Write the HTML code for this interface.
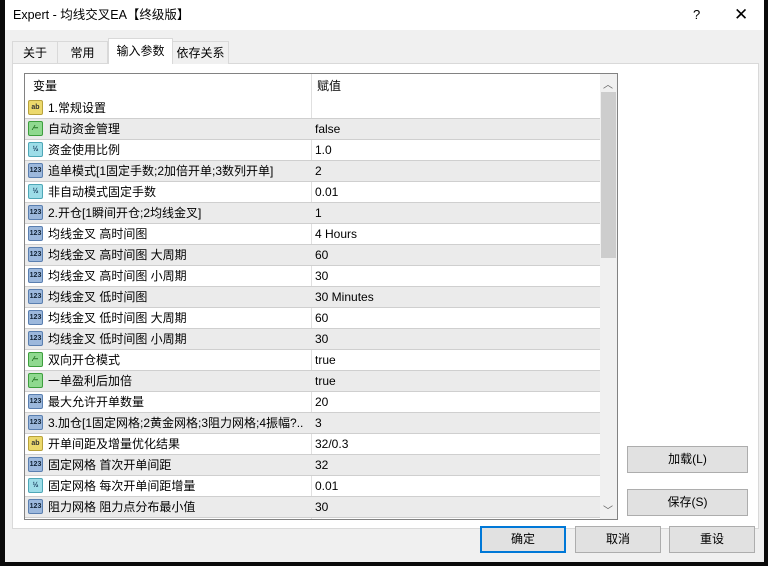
<!DOCTYPE html>
<html><head><meta charset="utf-8">
<style>
*{box-sizing:border-box;margin:0;padding:0}
body{width:768px;height:566px;background:#0a0a0a;position:relative;overflow:hidden;font-family:"Liberation Sans","Noto Sans CJK SC",sans-serif;font-size:12px;color:#000}
.win{position:absolute;left:5px;top:0;width:759px;height:562px;background:#f0f0f0}
.title{position:absolute;left:0;top:0;width:100%;height:30px;background:#fff}
.title .t{position:absolute;left:8px;top:0;line-height:30px;font-size:12.5px;white-space:nowrap}
.title .q{position:absolute;left:688px;top:0;line-height:30px;font-size:13px}
.title .x{position:absolute;left:729px;top:0;line-height:30px;font-size:17px}
.tab{position:absolute;top:41px;height:23px;border:1px solid #d9d9d9;border-bottom:none;background:#f0f0f0;line-height:22px;text-align:center;font-size:12px;white-space:nowrap}
.tab.a{top:38px;height:26px;background:#fff;line-height:24px}
.panel{position:absolute;left:7px;top:63px;width:747px;height:466px;background:#fff;border:1px solid #d9d9d9}
.tbl{position:absolute;left:19px;top:73px;width:594px;height:447px;border:1px solid #828282;background:#fff;overflow:hidden}
.hdr{position:absolute;left:0;top:0;width:577px;height:24px;line-height:24px}
.hdr span{position:absolute;top:0}
.row{position:absolute;left:0;width:575px;height:21px;border-bottom:1px solid #cfcfcf;line-height:20px}
.row.g{background:#ebebeb}
.row .n{position:absolute;left:23px;top:0;white-space:nowrap}
.row .v{position:absolute;left:290px;top:0}
.div{position:absolute;left:286px;top:0;width:1px;height:447px;background:#e0e0e0}
.ic{position:absolute;left:3px;top:2px;width:15px;height:15px;border-radius:2px;font-size:7px;line-height:13px;text-align:center;font-weight:bold;font-style:normal}
.ab{background:#ecd96c;border:1px solid #b8a23c;color:#333}
.n3{background:#9cb8dc;border:1px solid #5a7fb0;color:#123}
.hf{background:#9ddde8;border:1px solid #4ea7b7;color:#135}
.bo{background:#8fd98f;border:1px solid #3d9e3d;color:#050}
.sb{position:absolute;left:575px;top:0;width:17px;height:445px;background:#f0f0f0}
.sb .th{position:absolute;left:1px;top:18px;width:15px;height:166px;background:#cdcdcd}
.sb .up{position:absolute;left:3px;top:2px;font-size:10px;color:#606060}
.sb .dn{position:absolute;left:3px;bottom:2px;font-size:10px;color:#606060}
.btn{position:absolute;height:27px;background:#e1e1e1;border:1px solid #adadad;text-align:center;line-height:25px;font-size:12px}
.btn.d{border:2px solid #0078d7;line-height:23px}
</style></head><body>
<div class="win">
<div class="title"><span class="t">Expert - 均线交叉EA【终级版】</span><span class="q">?</span><span class="x">✕</span></div>
<div class="tab" style="left:7px;width:46px">关于</div>
<div class="tab" style="left:52px;width:51px">常用</div>
<div class="panel"></div>
<div class="tab a" style="left:103px;width:65px">输入参数</div>
<div class="tab" style="left:167px;width:57px">依存关系</div>
<div class="tbl">
<div class="hdr"><span style="left:8px">变量</span><span style="left:292px">赋值</span></div>
<div class="div"></div>
<div class="row" style="top:24px"><i class="ic ab">ab</i><span class="n">1.常规设置</span></div>
<div class="row g" style="top:45px"><i class="ic bo">⁄‒</i><span class="n">自动资金管理</span><span class="v">false</span></div>
<div class="row" style="top:66px"><i class="ic hf">½</i><span class="n">资金使用比例</span><span class="v">1.0</span></div>
<div class="row g" style="top:87px"><i class="ic n3">123</i><span class="n">追单模式[1固定手数;2加倍开单;3数列开单]</span><span class="v">2</span></div>
<div class="row" style="top:108px"><i class="ic hf">½</i><span class="n">非自动模式固定手数</span><span class="v">0.01</span></div>
<div class="row g" style="top:129px"><i class="ic n3">123</i><span class="n">2.开仓[1瞬间开仓;2均线金叉]</span><span class="v">1</span></div>
<div class="row" style="top:150px"><i class="ic n3">123</i><span class="n">均线金叉 高时间图</span><span class="v">4 Hours</span></div>
<div class="row g" style="top:171px"><i class="ic n3">123</i><span class="n">均线金叉 高时间图 大周期</span><span class="v">60</span></div>
<div class="row" style="top:192px"><i class="ic n3">123</i><span class="n">均线金叉 高时间图 小周期</span><span class="v">30</span></div>
<div class="row g" style="top:213px"><i class="ic n3">123</i><span class="n">均线金叉 低时间图</span><span class="v">30 Minutes</span></div>
<div class="row" style="top:234px"><i class="ic n3">123</i><span class="n">均线金叉 低时间图 大周期</span><span class="v">60</span></div>
<div class="row g" style="top:255px"><i class="ic n3">123</i><span class="n">均线金叉 低时间图 小周期</span><span class="v">30</span></div>
<div class="row" style="top:276px"><i class="ic bo">⁄‒</i><span class="n">双向开仓模式</span><span class="v">true</span></div>
<div class="row g" style="top:297px"><i class="ic bo">⁄‒</i><span class="n">一单盈利后加倍</span><span class="v">true</span></div>
<div class="row" style="top:318px"><i class="ic n3">123</i><span class="n">最大允许开单数量</span><span class="v">20</span></div>
<div class="row g" style="top:339px"><i class="ic n3">123</i><span class="n">3.加仓[1固定网格;2黄金网格;3阻力网格;4振幅?..</span><span class="v">3</span></div>
<div class="row" style="top:360px"><i class="ic ab">ab</i><span class="n">开单间距及增量优化结果</span><span class="v">32/0.3</span></div>
<div class="row g" style="top:381px"><i class="ic n3">123</i><span class="n">固定网格 首次开单间距</span><span class="v">32</span></div>
<div class="row" style="top:402px"><i class="ic hf">½</i><span class="n">固定网格 每次开单间距增量</span><span class="v">0.01</span></div>
<div class="row g" style="top:423px"><i class="ic n3">123</i><span class="n">阻力网格 阻力点分布最小值</span><span class="v">30</span></div>
<div class="sb"><div class="th"></div><span class="up">︿</span><span class="dn">﹀</span></div>
</div>
<div class="btn" style="left:622px;top:446px;width:121px">加载(L)</div>
<div class="btn" style="left:622px;top:489px;width:121px">保存(S)</div>
<div class="btn d" style="left:475px;top:526px;width:86px">确定</div>
<div class="btn" style="left:570px;top:526px;width:86px">取消</div>
<div class="btn" style="left:664px;top:526px;width:86px">重设</div>
</div>
</body></html>
